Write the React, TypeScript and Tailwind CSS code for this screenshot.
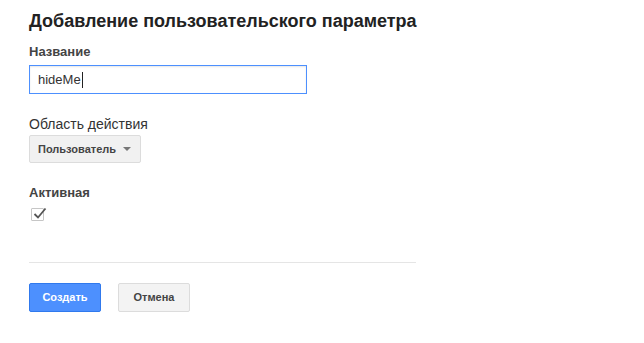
export default function App() {
  return (
    <div className="min-h-screen bg-white font-[family-name:'Liberation_Sans',Arial,sans-serif] text-[#222]">
      <div className="w-[387px] pl-[29px] pt-[11px] box-content">
        <h1 className="whitespace-nowrap text-[18px] font-bold leading-[21px] text-[#222]">Добавление пользовательского параметра</h1>

        <div className="mt-[12px] text-[13px] font-bold leading-[16px] text-[#444]">Название</div>
        <div className="mt-[5px] flex h-[29px] w-[278px] items-center border border-[#4d90fe] px-[8px] shadow-[inset_0_1px_2px_rgba(0,0,0,0.1)]">
          <span className="text-[13px] text-[#333]">hideMe</span>
          <span className="ml-[1px] h-[16px] w-px bg-[#222]" />
        </div>

        <div className="mt-[22px] text-[14px] leading-[16px] text-[#333]">Область действия</div>
        <div className="mt-[3px] flex h-[28px] w-[112px] items-center justify-between rounded-[2px] border border-[#dcdcdc] bg-[#f1f1f1] pl-[8px] pr-[9px]">
          <span className="text-[11px] font-bold text-[#444]">Пользователь</span>
          <span className="h-0 w-0 border-x-[4px] border-t-[4px] border-x-transparent border-t-[#777]" />
        </div>

        <div className="mt-[22px] text-[13px] font-bold leading-[16px] text-[#444]">Активная</div>
        <div className="mt-[7px] ml-[2px] relative h-[13px] w-[13px] rounded-[1px] border border-[#c6c6c6] bg-white">
          <svg className="absolute -top-[3px] left-[1px]" width="14" height="14" viewBox="0 0 14 14">
            <path d="M1.5 8 L5 11.5 L12.5 2.5" fill="none" stroke="#555" strokeWidth="1.8" />
          </svg>
        </div>

        <div className="mt-[41px] h-px w-full bg-[#e5e5e5]" />

        <div className="mt-[20px] flex gap-[17px]">
          <button className="h-[29px] w-[72px] rounded-[2px] border border-[#3079ed] bg-[#4d90fe] text-[11px] font-bold text-white">
            Создать
          </button>
          <button className="h-[29px] w-[72px] rounded-[2px] border border-[#dcdcdc] bg-[#f3f3f3] text-[11px] font-bold text-[#444]">
            Отмена
          </button>
        </div>
      </div>
    </div>
  )
}
